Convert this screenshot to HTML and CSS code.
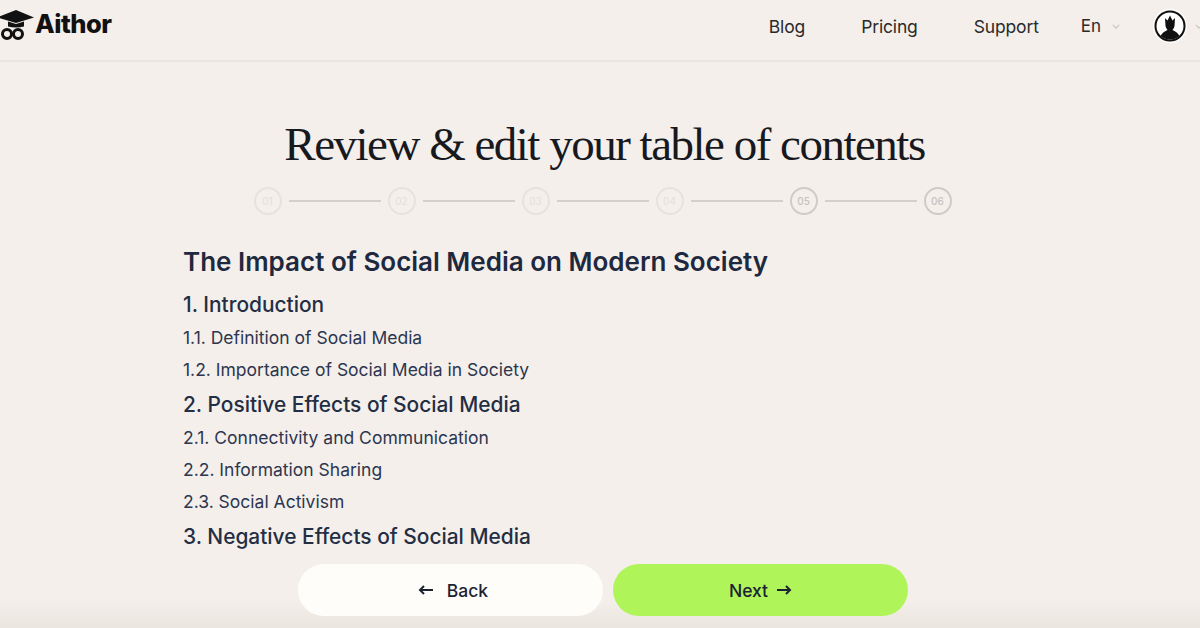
FILE: index.html
```html
<!DOCTYPE html>
<html lang="en">
<head>
    <meta charset="UTF-8">
    <meta name="viewport" content="width=device-width, initial-scale=1.0">
    <title>Aithor</title>
    <link rel="stylesheet" href="styles.css">
</head>
<body>
    <header class="topbar">
        <a class="logo">
            <svg class="logo-mark" viewBox="0 0 36 36" width="36" height="36">
                <path d="M17 5 L35 12.500 L17 18 L-2 12.500 Z" fill="#111"/>
                <path d="M9 16.500 L17 19 L25 16.500 L25 21.500 Q17 23.500 9 21.500 Z" fill="#111"/>
                <circle cx="8" cy="29" r="4.500" fill="none" stroke="#111" stroke-width="3"/>
                <circle cx="19" cy="29" r="4.500" fill="none" stroke="#111" stroke-width="3"/>
            </svg>
            <span>Aithor</span>
        </a>
        <nav class="nav">
            <a>Blog</a>
            <a>Pricing</a>
            <a>Support</a>
        </nav>
        <div class="lang">
            <span>En</span>
            <svg viewBox="0 0 10 6" width="8" height="5"><path d="M1 1 L5 5 L9 1" fill="none" stroke="#c9c6c1" stroke-width="1.500"/></svg>
        </div>
        <div class="avatar">
            <svg viewBox="0 0 32 32" width="32" height="32">
                <circle cx="16" cy="16" r="14.500" fill="#fff" stroke="#111" stroke-width="2"/>
                <path d="M11 8 L13.500 10.500 L16 5.500 L18.500 10.500 L21 8 L20.500 16 Q20 18.500 18.500 20 Q23.500 22 25.500 26 Q21 29.500 16 29.500 Q11 29.500 6.500 26 Q8.500 22 13.500 20 Q12 18.500 11.500 16 Z" fill="#111"/>
            </svg>
        </div>
        <svg class="avatar-caret" viewBox="0 0 10 6" width="8" height="5"><path d="M1 1 L5 5 L9 1" fill="none" stroke="#c9c6c1" stroke-width="1.500"/></svg>
    </header>

    <main class="page">
        <h1 class="title">Review &amp; edit your table of contents</h1>

        <div class="steps">
            <span class="step">01</span><i class="line"></i>
            <span class="step">02</span><i class="line"></i>
            <span class="step">03</span><i class="line"></i>
            <span class="step">04</span><i class="line"></i>
            <span class="step step-on">05</span><i class="line"></i>
            <span class="step step-on">06</span>
        </div>

        <section class="toc">
            <h2>The Impact of Social Media on Modern Society</h2>
            <h3>1. Introduction</h3>
            <p>1.1. Definition of Social Media</p>
            <p>1.2. Importance of Social Media in Society</p>
            <h3>2. Positive Effects of Social Media</h3>
            <p>2.1. Connectivity and Communication</p>
            <p>2.2. Information Sharing</p>
            <p>2.3. Social Activism</p>
            <h3>3. Negative Effects of Social Media</h3>
        </section>
    </main>

    <div class="actions">
        <button class="btn btn-back">
            <svg viewBox="0 0 16 12" width="16" height="12"><path d="M15 6 H2 M6 2 L2 6 L6 10" fill="none" stroke="#1c2232" stroke-width="2"/></svg>
            Back
        </button>
        <button class="btn btn-next">
            Next
            <svg viewBox="0 0 16 12" width="16" height="12"><path d="M1 6 H14 M10 2 L14 6 L10 10" fill="none" stroke="#1c2232" stroke-width="2"/></svg>
        </button>
    </div>
</body>
</html>
```

FILE: styles.css
```css
html, body { height: 100%; }
body { margin: 0; height: 628px; overflow: hidden; background: linear-gradient(to bottom, #f4efea 600px, #ebe5df 628px); color: #1f2a3d; font-family: Inter, 'Liberation Sans', sans-serif; display: flex; flex-direction: column; }

.topbar { height: 52px; padding-bottom: 8px; flex: none; display: flex; align-items: center; border-bottom: 2px solid #e9e5df; color: #2a2a2a; }
.logo { display: flex; align-items: center; margin-left: -1px; margin-top: -6px; font-size: 25.500px; font-weight: 800; color: #111; letter-spacing: -0.5px; }
.nav { margin-left: auto; display: flex; gap: 56px; font-size: 17.500px; letter-spacing: -0.15px; }
.lang { display: flex; align-items: center; gap: 11px; margin-left: 42px; font-size: 17px; }
.avatar { display: flex; margin-left: 34px; border-radius: 50%; box-shadow: 0 0 0 1px #fff; }
.avatar-caret { margin-left: 9px; margin-right: -3px; flex: none; }

.page { flex: 1; min-height: 0; display: flex; flex-direction: column; }
.title { margin: 55px 0 0 9px; text-align: center; font-family: 'Liberation Serif', serif; font-weight: 400; font-size: 47px; line-height: 54px; letter-spacing: -1.5px; color: #17191f; }

.steps { display: flex; align-items: center; justify-content: center; gap: 7px; margin-top: 16px; margin-left: 5px; }
.step { width: 24px; height: 24px; flex: none; border: 2px solid #e6e2dc; border-radius: 50%; display: flex; align-items: center; justify-content: center; font-size: 10px; color: #e3dfd9; }
.step-on { border-color: #cfccc6; color: #c6c3bd; font-weight: 500; }
.line { width: 92px; height: 2px; background-color: #d3d0ca; flex: none; }

.toc { margin: 30px 0 0 183px; }
.toc h2 { margin: 0; font-size: 26px; line-height: 34px; font-weight: 600; color: #1e2940; }
.toc h3 { margin: 0; padding-top: 2px; font-size: 20.900px; line-height: 34px; font-weight: 500; color: #232e44; }
.toc p { margin: 0; font-size: 17.500px; line-height: 32px; color: #2c3650; }
.toc h2 + h3 { margin-top: 7px; }

.actions { position: absolute; left: 298px; top: 564px; display: flex; gap: 10px; }
.btn { height: 52px; border: none; border-radius: 26px; font-family: inherit; font-size: 17.500px; font-weight: 500; color: #1c2232; display: flex; align-items: center; justify-content: center; }
.btn-back { width: 305px; gap: 13px; padding-right: 1px; background-color: #fffdfa; }
.btn-next { width: 295px; gap: 8px; background-color: #aff55a; }
```
